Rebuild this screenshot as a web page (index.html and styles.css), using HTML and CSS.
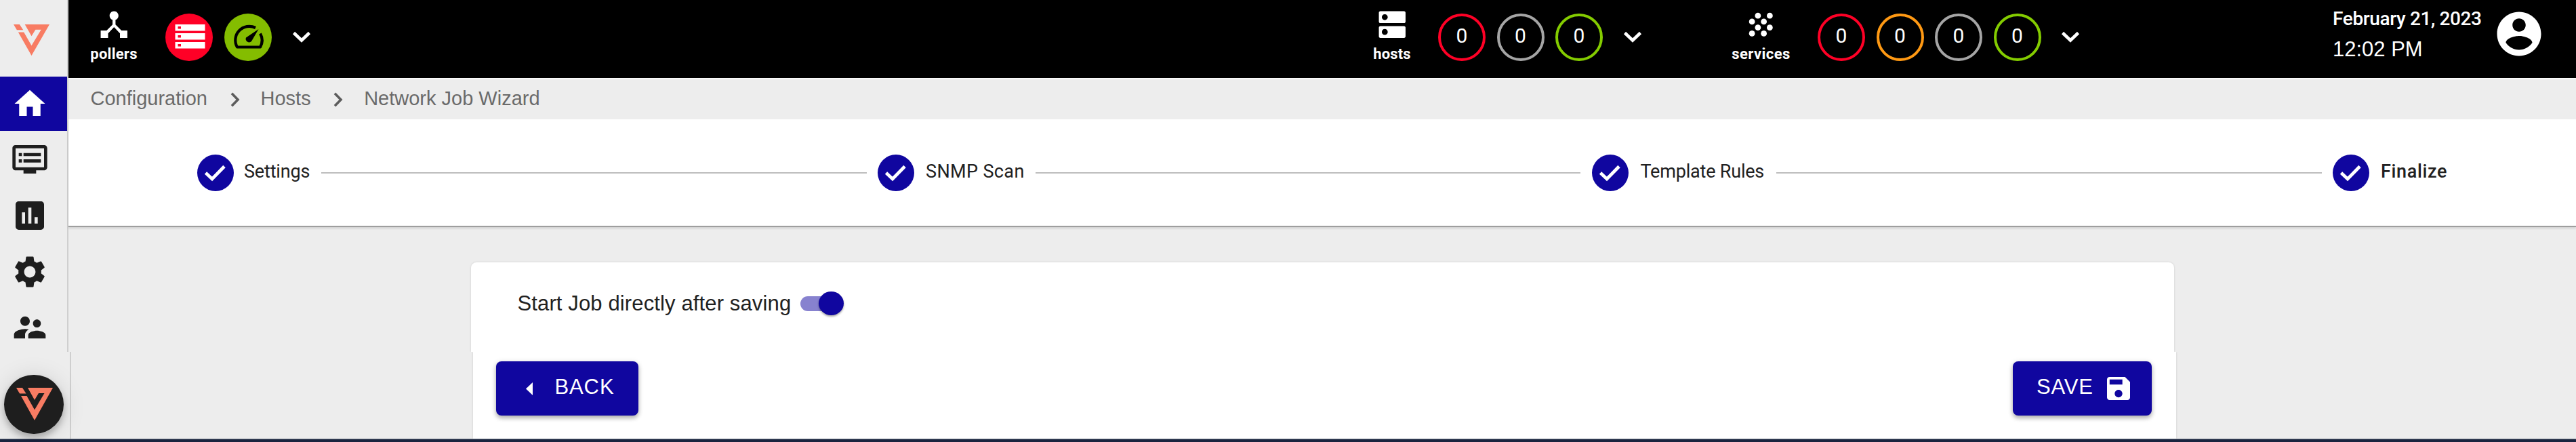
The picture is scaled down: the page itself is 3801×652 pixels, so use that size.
FILE: index.html
```html
<!DOCTYPE html>
<html lang="en">
<head>
<meta charset="utf-8">
<title>Network Job Wizard</title>
<link rel="stylesheet" href="styles.css">
</head>
<body>
<svg class="defs" aria-hidden="true">
  <symbol id="logo" viewBox="0 0 54 48" preserveAspectRatio="none"><path d="M0 0h9l5.500 8.500H5zM17 0h37L27 48 7 12h8.500L27 32.500 41.500 8H33l-6 10z"/></symbol>
  <symbol id="down" viewBox="0 0 28 17"><path d="M2.500 2.500 14 13.500 25.500 2.500" fill="none" stroke="currentColor" stroke-width="4.600"/></symbol>
  <symbol id="right" viewBox="0 0 14 22"><path d="M2 1.700 11 11 2 20.300" fill="none" stroke="currentColor" stroke-width="3.600"/></symbol>
  <symbol id="check" viewBox="0 0 54 54"><circle cx="27" cy="27" r="27" fill="#10069f"/><path d="M12.500 27 22 36 40 17.500" fill="none" stroke="#fff" stroke-width="4.800"/></symbol>
</svg>
<div class="app">
  <nav class="sidebar">
    <div class="sidebar-top">
      <a class="brand"><svg class="brand-logo"><use href="#logo"/></svg></a>
      <a class="nav-item active"><svg viewBox="0 0 24 24"><path d="M10 20v-6h4v6h5v-8h3L12 3 2 12h3v8z"/></svg></a>
      <a class="nav-item"><svg viewBox="0 0 24 24"><path d="M21 3H3c-1.100 0-2 .9-2 2v12c0 1.100.9 2 2 2h5v2h8v-2h5c1.100 0 1.990-.9 1.990-2L23 5c0-1.100-.9-2-2-2zm0 14H3V5h18v12zm-2-9H8v2h11V8zm0 4H8v2h11v-2zM7 8H5v2h2V8zm0 4H5v2h2v-2z"/></svg></a>
      <a class="nav-item"><svg viewBox="0 0 24 24"><path d="M19 3H5c-1.100 0-2 .9-2 2v14c0 1.100.9 2 2 2h14c1.100 0 2-.9 2-2V5c0-1.100-.9-2-2-2zM9 17H7v-7h2v7zm4 0h-2V7h2v10zm4 0h-2v-4h2v4z"/></svg></a>
      <a class="nav-item"><svg viewBox="0 0 24 24"><path d="M19.140 12.940c.04-.3.06-.61.06-.94 0-.32-.02-.64-.07-.94l2.030-1.580c.18-.14.23-.41.12-.61l-1.920-3.320c-.12-.22-.37-.29-.59-.22l-2.390.96c-.5-.38-1.030-.7-1.620-.94l-.36-2.540c-.04-.24-.24-.41-.48-.41h-3.840c-.24 0-.43.17-.47.41l-.36 2.540c-.59.24-1.130.57-1.620.94l-2.390-.96c-.22-.08-.47 0-.59.22L2.740 8.870c-.12.21-.08.47.12.61l2.030 1.580c-.05.3-.09.63-.09.94s.02.64.07.94l-2.030 1.580c-.18.14-.23.41-.12.61l1.920 3.320c.12.22.37.29.59.22l2.390-.96c.5.38 1.030.7 1.620.94l.36 2.540c.05.24.24.41.48.41h3.840c.24 0 .44-.17.47-.41l.36-2.540c.59-.24 1.130-.56 1.620-.94l2.390.96c.22.08.47 0 .59-.22l1.920-3.320c.12-.22.07-.47-.12-.61l-2.010-1.580zM12 15.600c-1.980 0-3.600-1.620-3.600-3.600s1.620-3.600 3.600-3.600 3.600 1.620 3.600 3.600-1.620 3.600-3.600 3.600z"/></svg></a>
      <a class="nav-item"><svg viewBox="0 0 24 24"><path d="M16.500 12c1.380 0 2.490-1.120 2.490-2.500S17.880 7 16.500 7 14 8.120 14 9.500s1.120 2.500 2.500 2.500zM9 11c1.660 0 2.990-1.340 2.990-3S10.660 5 9 5 6 6.340 6 8s1.340 3 3 3zm7.500 3c-1.830 0-5.500.92-5.500 2.750V19h11v-2.250c0-1.830-3.670-2.750-5.500-2.750zM9 13c-2.330 0-7 1.170-7 3.500V19h7v-2.250c0-.85.33-2.340 2.370-3.470C10.500 13.100 9.660 13 9 13z"/></svg></a>
    </div>
    <div class="sidebar-foot"><a class="fab"><svg class="fab-logo"><use href="#logo"/></svg></a></div>
  </nav>

  <div class="page">
    <header class="topbar">
      <div class="group pollers">
        <div class="kind">
          <svg class="kind-icon" viewBox="0 0 24 24"><path d="M17 16l-4-4V8.820C14.160 8.400 15 7.300 15 6c0-1.660-1.340-3-3-3S9 4.340 9 6c0 1.300.84 2.400 2 2.820V12l-4 4H3v5h5v-3.050l4-4.200 4 4.200V21h5v-5h-4z"/></svg>
          <span class="kind-label">pollers</span>
        </div>
        <span class="disc disc-red"><svg class="disc-icon" viewBox="0 0 70 70"><path fill="#fff" d="M14.500 16h44v9.500h-44zM14.500 29h44v9.500h-44zM14.500 42h44v9.500h-44z"/><path fill="#ff0026" d="M18.500 19h4.500v3.500h-4.500zM18.500 32h4.500v3.500h-4.500zM18.500 45h4.500v3.500h-4.500z"/></svg></span>
        <span class="disc disc-green"><svg class="disc-icon" viewBox="0 0 70 70"><path d="M46 21A20.500 20.500 0 0 0 19 49.500H53A20.500 20.500 0 0 0 53 29.500" fill="none" stroke="#000" stroke-width="4.200" stroke-linejoin="round"/><path d="M50.500 23 40 41a5 5 0 0 1-8-5.500z"/></svg></span>
        <svg class="down"><use href="#down"/></svg>
      </div>
      <div class="group hosts">
        <div class="kind">
          <svg class="kind-icon" viewBox="0 0 24 24"><path d="M20 13H4c-.55 0-1 .45-1 1v6c0 .55.45 1 1 1h16c.55 0 1-.45 1-1v-6c0-.55-.45-1-1-1zM7 19c-1.100 0-2-.9-2-2s.9-2 2-2 2 .9 2 2-.9 2-2 2zM20 3H4c-.55 0-1 .45-1 1v6c0 .55.45 1 1 1h16c.55 0 1-.45 1-1V4c0-.55-.45-1-1-1zM7 9c-1.100 0-2-.9-2-2s.9-2 2-2 2 .9 2 2-.9 2-2 2z"/></svg>
          <span class="kind-label">hosts</span>
        </div>
        <span class="ring red">0</span><span class="ring gray">0</span><span class="ring green">0</span>
        <svg class="down"><use href="#down"/></svg>
      </div>
      <div class="group services">
        <div class="kind">
          <svg class="kind-icon" viewBox="0 0 24 24"><circle cx="10" cy="6" r="2"/><circle cx="18" cy="6" r="2"/><circle cx="6" cy="10" r="2"/><circle cx="14" cy="10" r="2"/><circle cx="10" cy="14" r="2"/><circle cx="18" cy="14" r="2"/><circle cx="6" cy="18" r="2"/><circle cx="14" cy="18" r="2"/></svg>
          <span class="kind-label">services</span>
        </div>
        <span class="ring red">0</span><span class="ring orange">0</span><span class="ring gray">0</span><span class="ring green">0</span>
        <svg class="down"><use href="#down"/></svg>
      </div>
      <div class="clock"><span class="date">February 21, 2023</span><span class="time">12:02 PM</span></div>
      <svg class="account" viewBox="0 0 24 24"><path d="M12 2C6.480 2 2 6.480 2 12s4.480 10 10 10 10-4.480 10-10S17.520 2 12 2zm0 3c1.660 0 3 1.340 3 3s-1.340 3-3 3-3-1.340-3-3 1.340-3 3-3zm0 14.200c-2.500 0-4.710-1.280-6-3.220.03-1.990 4-3.080 6-3.080 1.990 0 5.970 1.090 6 3.080-1.290 1.940-3.500 3.220-6 3.220z"/></svg>
    </header>

    <div class="crumbs">
      <span class="crumb">Configuration</span>
      <svg class="right"><use href="#right"/></svg>
      <span class="crumb">Hosts</span>
      <svg class="right"><use href="#right"/></svg>
      <span class="crumb">Network Job Wizard</span>
    </div>

    <div class="stepper">
      <div class="step settings"><svg class="check"><use href="#check"/></svg><span>Settings</span></div>
      <i class="line"></i>
      <div class="step snmp"><svg class="check"><use href="#check"/></svg><span>SNMP Scan</span></div>
      <i class="line"></i>
      <div class="step rules"><svg class="check"><use href="#check"/></svg><span>Template Rules</span></div>
      <i class="line"></i>
      <div class="step finalize"><svg class="check"><use href="#check"/></svg><span>Finalize</span></div>
    </div>

    <main class="content">
      <section class="option">
        <span class="option-label">Start Job directly after saving</span>
        <span class="switch"><span class="thumb"></span></span>
      </section>
      <section class="actions">
        <button class="btn back"><svg class="tri" viewBox="0 0 10 19"><path d="M10 0v19L0 9.500z"/></svg><span>BACK</span></button>
        <button class="btn save"><span>SAVE</span><svg class="disk" viewBox="3 3 18 18"><path d="M17 3H5c-1.110 0-2 .9-2 2v14c0 1.100.89 2 2 2h14c1.100 0 2-.9 2-2V7l-4-4zm-5 16c-1.660 0-3-1.340-3-3s1.340-3 3-3 3 1.340 3 3-1.340 3-3 3zm3-10H5V5h10v4z"/></svg></button>
      </section>
    </main>
  </div>
</div>
<footer class="edge"></footer>
</body>
</html>
```
FILE: styles.css
```css
* { box-sizing: border-box; }
body { margin: 0; width: 3801px; height: 652px; overflow: hidden; background: #ededed; font-family: Roboto, "Liberation Sans", sans-serif; }
svg { display: block; flex: none; }
.defs { position: absolute; width: 0; height: 0; }
.app { display: flex; height: 647px; }

.sidebar { width: 105px; flex: none; display: flex; flex-direction: column; }
.sidebar-top { width: 101px; height: 519px; border-right: 2px solid #cfcfcf; }
.brand { display: block; height: 113px; padding: 36px 0 0 20px; }
.brand-logo { width: 53px; height: 46px; fill: #f87c63; }
.nav-item { display: flex; height: 82.5px; align-items: center; justify-content: center; padding-right: 12px; }
.nav-item svg { width: 56px; height: 56px; fill: #1e1e1e; }
.nav-item.active { height: 80px; background: #10069f; }
.nav-item.active svg { width: 54px; height: 54px; fill: #fff; }
.nav-item.active + .nav-item { height: 84px; }
.sidebar-foot { height: 128px; padding: 33.500px 0 0 6px; border-right: 2px solid #cfcfcf; }
.fab { display: block; width: 87.500px; height: 87.500px; padding: 19.500px 0 0 17.500px; border-radius: 50%; background: #1e1e1e; box-shadow: 0 6px 10px rgba(0,0,0,.24), 0 3px 34px rgba(0,0,0,.13); }
.fab-logo { width: 54px; height: 48px; fill: #f87c63; }

.page { flex: 1; margin-left: -4px; min-width: 0; }
.topbar { display: flex; height: 115px; background: #000; color: #fff; }
.group { display: flex; }
.kind { display: flex; flex-direction: column; align-items: center; }
.kind-icon { width: 52.500px; height: 52.500px; margin-top: 9.500px; fill: #fff; }
.kind-label { margin-top: 4.500px; font: 700 22px/26px Roboto, sans-serif; white-space: nowrap; }
.pollers { width: 1925px; padding-left: 32px; }
.pollers .kind { width: 70px; margin-right: 41px; letter-spacing: .25px; }
.hosts { width: 529px; }
.hosts .kind { width: 56px; margin-right: 40px; letter-spacing: .1px; }
.services .kind { width: 87px; margin-right: 40px; letter-spacing: .45px; }
.disc { width: 70px; height: 70px; margin: 20px 17px 0 0; border-radius: 50%; }
.disc-red { background: #ff0026; }
.disc-green { background: #84bd00; }
.disc-icon { width: 70px; height: 70px; }
.down { width: 28px; height: 17px; margin: 45.500px 0 0 13px; color: #fff; }
.ring { width: 70px; height: 70px; margin: 20px 16.500px 0 0; border: 4px solid; border-radius: 50%; text-align: center; font-size: 30px; line-height: 58px; }
.ring.red { border-color: #ff0026; }
.ring.orange { border-color: #ff9913; }
.ring.gray { border-color: #a5a5a5; }
.ring.green { border-color: #84cc00; }
.clock { display: flex; flex-direction: column; margin-left: auto; width: 245px; padding-top: 12px; white-space: nowrap; }
.date { font: 500 28px/32px Roboto, sans-serif; letter-spacing: -.37px; }
.time { margin-top: 11px; font: 31px/36px "Liberation Sans", sans-serif; }
.account { width: 78px; height: 78px; margin: 11px 45px 0 -9px; fill: #fff; }

.crumbs { display: flex; align-items: center; height: 61px; padding: 0 0 4px 32.500px; border-top: 2px solid #fafafa; color: #6a6a6a; font: 29px/34px "Liberation Sans", sans-serif; white-space: nowrap; }
.right { width: 14px; height: 22px; margin: 5px 31px 0 33.500px; color: #5c5c5c; }

.stepper { display: flex; align-items: center; height: 159px; padding: 1px 190px 0 190px; background: #fff; border-bottom: 2px solid #9e9e9e; box-shadow: 0 2px 3px rgba(0,0,0,.12); color: #212121; }
.step { display: flex; align-items: center; flex: none; font-size: 27px; line-height: 32px; white-space: nowrap; }
.step span { padding-bottom: 4px; }
.check { width: 54px; height: 54px; margin-right: 17px; }
.settings { width: 166.500px; letter-spacing: -.17px; }
.settings .check { margin-right: 15px; }
.snmp { width: 216px; letter-spacing: .37px; }
.rules { width: 256px; letter-spacing: -.2px; }
.rules .check { margin-right: 18px; }
.finalize { width: 169px; font-weight: 500; letter-spacing: .65px; }
.line { flex: 1; height: 2px; margin: 0 16.500px; background: #bdbdbd; }

.content { padding: 52px 0 0 593.500px; }
.option { display: flex; align-items: center; width: 2513px; height: 132px; padding: 0 0 11px 69px; border-radius: 8px 8px 0 0; background: #fff; box-shadow: 0 0 3px rgba(0,0,0,.14); clip-path: inset(-4px -4px 0 -4px); }
.option-label { font: 31px/36px "Liberation Sans", sans-serif; letter-spacing: .13px; color: #212121; white-space: nowrap; }
.switch { width: 62px; height: 22px; margin-left: 14px; padding-left: 27px; border-radius: 11px; background: #8782cf; }
.thumb { display: block; width: 37px; height: 35px; margin-top: -6.500px; border-radius: 50%; background: #10069f; box-shadow: 0 2px 3px rgba(0,0,0,.35); }
.actions { display: flex; justify-content: space-between; width: 2513px; height: 128px; margin-left: 3.500px; padding: 14px 36px 0 34px; background: #fff; box-shadow: 0 0 3px rgba(0,0,0,.14); clip-path: inset(0 -4px); }
.btn { display: flex; align-items: center; height: 80px; padding: 0; border: 0; border-radius: 8px; background: #10069f; color: #fff; font: 31px/36px "Liberation Sans", sans-serif; letter-spacing: .88px; box-shadow: 0 4px 6px rgba(0,0,0,.26), 0 1px 8px rgba(0,0,0,.12); }
.btn span { padding-bottom: 5px; }
.back { width: 210px; padding-left: 44px; }
.tri { width: 10px; height: 19px; margin-right: 32.500px; fill: #fff; }
.save { width: 205px; padding-left: 35px; }
.disk { width: 34px; height: 34px; margin-left: 20px; fill: #fff; }

.edge { height: 5px; border-top: 1px solid #8c929c; background: #19243f; }
```
